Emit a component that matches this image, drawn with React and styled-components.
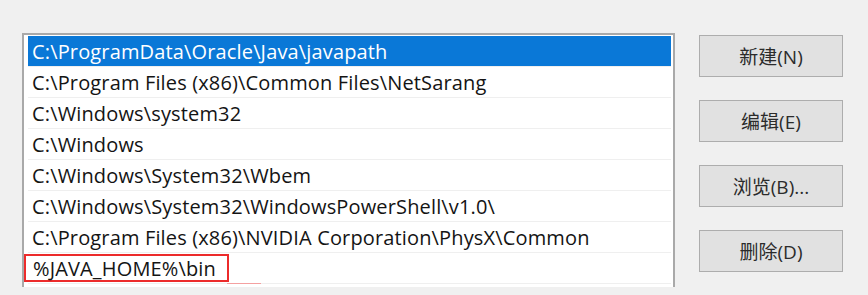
import styled, { createGlobalStyle } from "styled-components";

const GlobalStyle = createGlobalStyle`
html, body {
    margin: 0;
    padding: 0;
    background: #f0f0f0;
}
`;

const paths = [
    "C:\\ProgramData\\Oracle\\Java\\javapath",
    "C:\\Program Files (x86)\\Common Files\\NetSarang",
    "C:\\Windows\\system32",
    "C:\\Windows",
    "C:\\Windows\\System32\\Wbem",
    "C:\\Windows\\System32\\WindowsPowerShell\\v1.0\\",
    "C:\\Program Files (x86)\\NVIDIA Corporation\\PhysX\\Common",
    "%JAVA_HOME%\\bin",
];

const buttons = ["新建(N)", "编辑(E)", "浏览(B)...", "删除(D)"];

const App = () => {
    return (
        <Container>
            <GlobalStyle />
            <PathList>
                {paths.map((p, i) => (
                    <Row key={p} selected={i === 0}>
                        {i === paths.length - 1 ? <Marked>{p}</Marked> : p}
                    </Row>
                ))}
            </PathList>
            <Buttons>
                {buttons.map((b) => (
                    <Button key={b}>{b}</Button>
                ))}
            </Buttons>
        </Container>
    );
};

const Container = styled.div`
display: flex;
align-items: flex-start;
width: 868px;
height: 295px;
box-sizing: border-box;
padding: 33px 0 0 22px;
overflow: hidden;
font-family: "Open Sans", "Noto Sans CJK SC", sans-serif;
`;

const PathList = styled.div`
width: 653px;
height: 254px;
box-sizing: border-box;
background: #ffffff;
border: 2px solid #a9a9a9;
border-bottom: none;
padding: 1px 2px 0 4px;
overflow: hidden;
`;

const Row = styled.div`
height: 30px;
border-bottom: 1px solid #efefef;
padding-left: 4px;
display: flex;
align-items: center;
font-size: 20px;
letter-spacing: 0.15px;
white-space: nowrap;
color: ${(props) => (props.selected ? "#ffffff" : "#141414")};
background: ${(props) => (props.selected ? "#0a78d7" : "transparent")};
`;

const Marked = styled.span`
position: relative;
margin-left: -8px;
padding: 0 11px 0 7px;
height: 28px;
line-height: 26px;
border: 2px solid #ec2b2b;
box-sizing: border-box;

&::after {
    content: "";
    position: absolute;
    left: 100%;
    bottom: -4px;
    width: 34px;
    height: 1px;
    background: #f4a0a0;
}
`;

const Buttons = styled.div`
display: flex;
flex-direction: column;
gap: 23px;
margin: 2px 0 0 24px;
`;

const Button = styled.div`
width: 144px;
height: 42px;
box-sizing: border-box;
background: #e1e1e1;
border: 1px solid #adadad;
display: flex;
align-items: center;
justify-content: center;
font-size: 19px;
color: #2b2b2b;
`;

export default App;
